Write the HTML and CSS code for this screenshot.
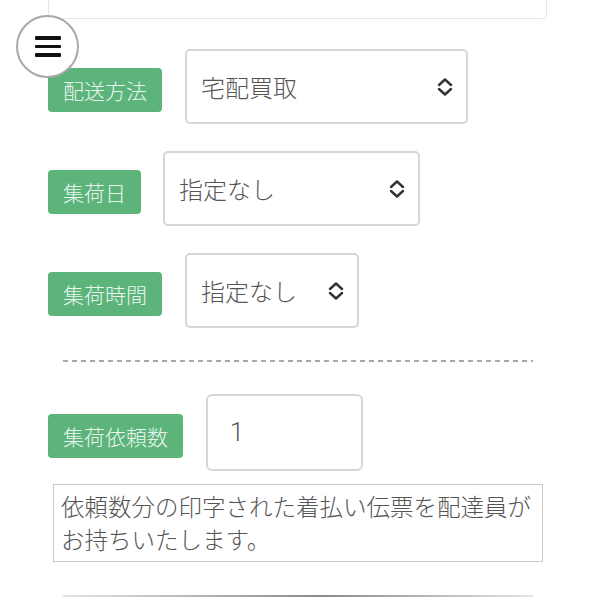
FILE: index.html
```html
<!DOCTYPE html>
<html lang="ja">
<head>
<meta charset="utf-8">
<title>集荷依頼</title>
<link rel="stylesheet" href="styles.css">
</head>
<body>
<button class="menu-btn" aria-label="メニュー">
  <span class="bar"></span><span class="bar"></span><span class="bar"></span>
</button>
<main class="form">
  <div class="top-box"></div>

  <div class="row row-first">
    <span class="tag">配送方法</span>
    <div class="select w-method">
      <span class="value">宅配買取</span>
      <svg class="chev" viewBox="0 0 16 18" width="16" height="18"><path d="M2 7 L8 1.5 L14 7 M2 11 L8 16.5 L14 11" fill="none" stroke="#333" stroke-width="2.4" stroke-linecap="round" stroke-linejoin="round"/></svg>
    </div>
  </div>

  <div class="row">
    <span class="tag">集荷日</span>
    <div class="select w-date">
      <span class="value">指定なし</span>
      <svg class="chev" viewBox="0 0 16 18" width="16" height="18"><path d="M2 7 L8 1.5 L14 7 M2 11 L8 16.5 L14 11" fill="none" stroke="#333" stroke-width="2.4" stroke-linecap="round" stroke-linejoin="round"/></svg>
    </div>
  </div>

  <div class="row">
    <span class="tag">集荷時間</span>
    <div class="select w-time">
      <span class="value">指定なし</span>
      <svg class="chev" viewBox="0 0 16 18" width="16" height="18"><path d="M2 7 L8 1.5 L14 7 M2 11 L8 16.5 L14 11" fill="none" stroke="#333" stroke-width="2.4" stroke-linecap="round" stroke-linejoin="round"/></svg>
    </div>
  </div>

  <div class="dash"></div>

  <div class="row row-count">
    <span class="tag">集荷依頼数</span>
    <div class="num-input">1</div>
  </div>

  <p class="note">依頼数分の印字された着払い伝票を配達員がお持ちいたします。</p>

  <div class="rule"></div>
</main>
</body>
</html>
```

FILE: styles.css
```css
* { box-sizing: border-box; }

html, body {
  margin: 0;
  padding: 0;
  background: #ffffff;
}

body {
  font-family: "Noto Sans CJK JP", "Noto Sans", sans-serif;
  font-weight: 300;
  color: #555555;
  width: 596px;
  height: 600px;
  overflow: hidden;
}

.menu-btn {
  position: absolute;
  left: 16px;
  top: 15px;
  width: 63px;
  height: 63px;
  border-radius: 50%;
  border: 2px solid #a8a8a8;
  background: #ffffff;
  padding: 0;
  display: flex;
  flex-direction: column;
  align-items: center;
  justify-content: center;
  gap: 5px;
  z-index: 10;
}

.menu-btn .bar {
  display: block;
  width: 26px;
  height: 3.6px;
  background: #111111;
  border-radius: 1px;
}

.form {
  margin-left: 48px;
  width: 499px;
  display: flex;
  flex-direction: column;
}

.top-box {
  height: 19px;
  border: 1px solid #e6e6e6;
  border-top: none;
  border-radius: 0 0 5px 5px;
}

.row {
  display: flex;
  align-items: center;
  gap: 23px;
  margin-top: 27px;
}

.row-first { margin-top: 30px; }

.tag {
  display: inline-flex;
  align-items: center;
  height: 44px;
  padding: 0 15px;
  margin-top: 6px;
  background: #5cb47a;
  color: #e9f6ee;
  font-size: 21px;
  border-radius: 4px;
  white-space: nowrap;
}

.select {
  height: 75px;
  display: flex;
  align-items: center;
  justify-content: space-between;
  padding: 0 13px 0 14px;
  border: 2px solid #d6d6d6;
  border-radius: 5px;
  font-size: 24px;
  color: #555555;
  background: #ffffff;
}

.w-method { width: 283px; }
.w-date { width: 257px; margin-left: -1px; }
.w-time { width: 174px; }

.chev { flex: none; }

.dash {
  height: 2px;
  margin: 32px 14px 0 15px;
  background: repeating-linear-gradient(to right, #a9a9a9 0 5px, transparent 5px 9px);
}

.row-count { margin-top: 32px; }

.num-input {
  width: 157px;
  height: 77px;
  display: flex;
  align-items: center;
  padding-left: 22px;
  border: 2px solid #d6d6d6;
  border-radius: 6px;
  font-family: Roboto, "Noto Sans CJK JP", sans-serif;
  font-weight: 300;
  font-size: 25px;
  color: #555555;
}

.note {
  margin: 13px 4px 0 5px;
  padding: 5px 7px;
  border: 1px solid #c8c8c8;
  font-size: 23.5px;
  line-height: 33px;
  color: #555555;
}

.rule {
  height: 2px;
  margin: 33px 14px 0 15px;
  background: linear-gradient(to right, #e4e4e4, #8a8a8a 55%, #e4e4e4);
}
```
